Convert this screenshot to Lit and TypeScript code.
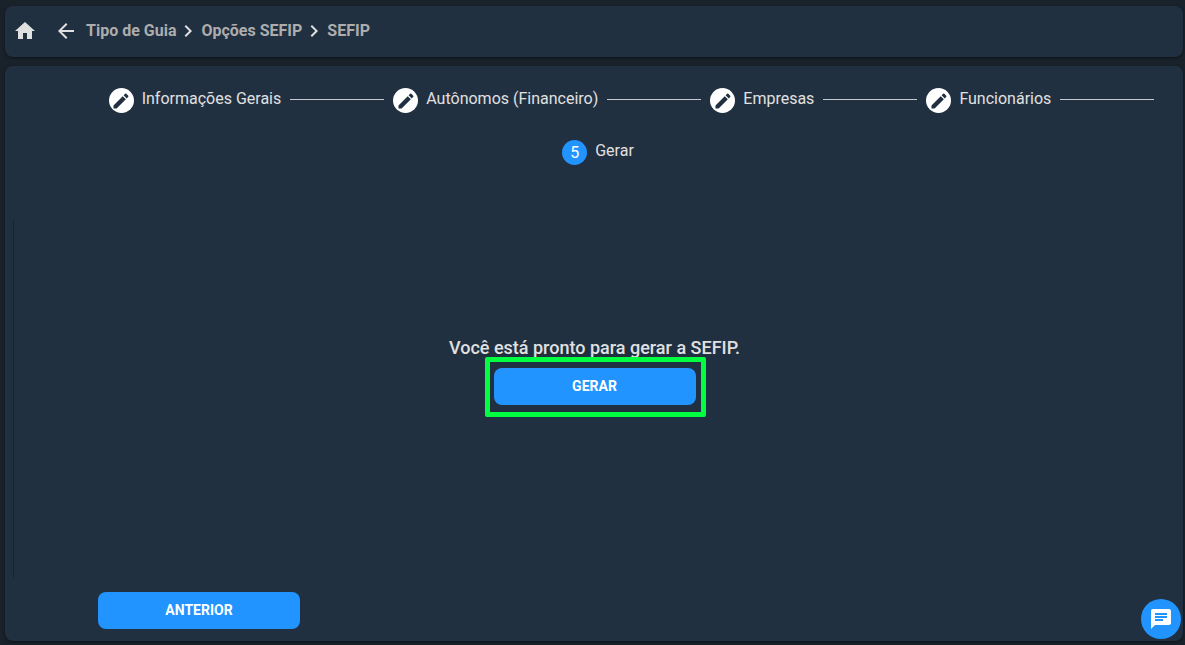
import { LitElement, html, css, svg } from "lit";
import { customElement, property, state } from "lit/decorators.js";

const icon = (path: string, size: number) => html`
  <svg width=${size} height=${size} viewBox="0 0 24 24" fill="currentColor" aria-hidden="true">
    ${svg`<path d=${path}></path>`}
  </svg>
`;

const HOME = "M10 20v-6h4v6h5v-8h3L12 3 2 12h3v8z";
const BACK = "M20 11H7.83l5.59-5.59L12 4l-8 8 8 8 1.41-1.41L7.83 13H20v-2z";
const CHEVRON = "M10 6L8.59 7.41 13.17 12l-4.58 4.59L10 18l6-6z";
const PENCIL =
  "M3 17.25V21h3.75L17.81 9.94l-3.75-3.75L3 17.25zM20.71 7.04c.39-.39.39-1.02 0-1.41l-2.34-2.34c-.39-.39-1.02-.39-1.41 0l-1.83 1.83 3.75 3.75 1.83-1.83z";
const CHAT =
  "M20 2H4c-1.1 0-1.99.9-1.99 2L2 22l4-4h14c1.1 0 2-.9 2-2V4c0-1.1-.9-2-2-2zM6 9h12v2H6V9zm8 5H6v-2h8v2zm4-6H6V6h12v2z";

@customElement("sefip-breadcrumb")
class SefipBreadcrumb extends LitElement {
  @property({ attribute: false }) items: string[] = [];

  static styles = css`
    :host {
      display: block;
    }
    .bar {
      display: flex;
      align-items: center;
      min-height: 51px;
      padding: 0 8px 2px;
      box-sizing: border-box;
      border-radius: 8px;
      background: #213040;
      box-shadow: 0 1px 3px rgba(0, 0, 0, 0.5);
    }
    svg {
      display: block;
    }
    .home,
    .back {
      color: #e0e0e0;
      background: none;
      border: 0;
      padding: 0;
      cursor: pointer;
    }
    .back {
      margin-left: 17px;
    }
    .trail {
      display: flex;
      align-items: center;
      flex-wrap: wrap;
      list-style: none;
      margin: 0 0 0 8px;
      padding: 0;
      color: #e0e0e0;
    }
    .crumb {
      display: flex;
      align-items: center;
      gap: 1px;
    }
    .link {
      color: #adadad;
      font-weight: 700;
      font-size: 16px;
      line-height: 24px;
      text-decoration: none;
    }
  `;

  render() {
    return html`
      <nav class="bar" aria-label="Navegação">
        <a class="home" href="#" aria-label="Início">${icon(HOME, 24)}</a>
        <button class="back" type="button" aria-label="Voltar">${icon(BACK, 24)}</button>
        <ol class="trail">
          ${this.items.map(
            (item, i) => html`<li class="crumb">
              ${i > 0 ? icon(CHEVRON, 24) : ""}<a class="link" href="#">${item}</a>
            </li>`
          )}
        </ol>
      </nav>
    `;
  }
}

@customElement("sefip-steps")
class SefipSteps extends LitElement {
  @property({ attribute: false }) steps: string[] = [];
  @property({ type: Number }) current = 0;

  static styles = css`
    :host {
      display: block;
    }
    .steps {
      display: flex;
      flex-wrap: wrap;
      justify-content: center;
      gap: 27px 9px;
      list-style: none;
      margin: 0;
      padding: 0 0 0 8px;
    }
    .step {
      display: flex;
      align-items: center;
      gap: 8px;
      color: #e0e0e0;
    }
    .step:first-child {
      margin-left: 67px;
    }
    .step.current {
      flex-basis: 100%;
      justify-content: center;
    }
    .mark {
      display: flex;
      align-items: center;
      justify-content: center;
      width: 25px;
      height: 25px;
      border-radius: 50%;
      background: #fff;
      color: #213040;
      font-size: 16px;
      line-height: 24px;
    }
    .current .mark {
      background: #2194ff;
      color: #fff;
    }
    .label {
      font-size: 16px;
      line-height: 22px;
      padding-bottom: 3px;
    }
    .line {
      width: 94px;
      height: 1px;
      margin: 0 0 2px 1px;
      background: #c6cacf;
    }
  `;

  render() {
    return html`
      <ol class="steps">
        ${this.steps.map((label, i) => {
          const current = i === this.current;
          return html`<li class="step ${current ? "current" : ""}">
            <span class="mark">${current ? i + 1 : icon(PENCIL, 20)}</span>
            <span class="label">${label}</span>
            ${current ? "" : html`<span class="line"></span>`}
          </li>`;
        })}
      </ol>
    `;
  }
}

@customElement("app-root")
class AppRoot extends LitElement {
  @state() private step = 4;

  private crumbs = ["Tipo de Guia", "Opções SEFIP", "SEFIP"];
  private steps = [
    "Informações Gerais",
    "Autônomos (Financeiro)",
    "Empresas",
    "Funcionários",
    "Gerar",
  ];

  static styles = css`
    :host {
      display: flex;
      flex-direction: column;
      gap: 9px;
      box-sizing: border-box;
      min-height: 100vh;
      padding: 6px 2px 4px 5px;
      background: #19222b;
      color: #e0e0e0;
      font-family: Roboto, "Liberation Sans", sans-serif;
    }
    .panel {
      flex: 1;
      display: flex;
      flex-direction: column;
      box-sizing: border-box;
      padding: 22px 0 12px;
      border-radius: 8px;
      background: #213040;
      box-shadow: 0 1px 3px rgba(0, 0, 0, 0.5);
    }
    .content {
      flex: 1;
      display: flex;
      flex-direction: column;
      align-items: center;
      justify-content: center;
      margin: 55px 8px 14px;
      padding-bottom: 57px;
      border-left: 1px solid #17232f;
    }
    .title {
      margin: 0 0 8px;
      font-size: 18px;
      line-height: 24px;
      font-weight: 500;
    }
    .button {
      width: 202px;
      height: 37px;
      padding: 0 16px 2px;
      border: 0;
      border-radius: 8px;
      background: #2194ff;
      color: #fff;
      font-family: inherit;
      font-size: 14px;
      line-height: 20px;
      font-weight: 700;
      text-transform: uppercase;
      cursor: pointer;
    }
    .target {
      position: relative;
      display: flex;
    }
    .highlight {
      position: absolute;
      inset: -11px -10px -12px -9px;
      border: 5px solid #00ff40;
      border-radius: 2px;
      pointer-events: none;
    }
    .footer {
      display: flex;
      padding: 0 93px;
    }
    .chat {
      position: fixed;
      right: 4px;
      bottom: 6px;
      display: flex;
      align-items: center;
      justify-content: center;
      width: 40px;
      height: 40px;
      padding: 0;
      border: 0;
      border-radius: 50%;
      background: #2194ff;
      color: #fff;
      cursor: pointer;
    }
  `;

  render() {
    return html`
      <sefip-breadcrumb .items=${this.crumbs}></sefip-breadcrumb>
      <main class="panel">
        <sefip-steps .steps=${this.steps} .current=${this.step}></sefip-steps>
        <section class="content">
          <h1 class="title">Você está pronto para gerar a SEFIP.</h1>
          <div class="target">
            <button class="button" type="button">Gerar</button>
            <span class="highlight"></span>
          </div>
        </section>
        <div class="footer">
          <button class="button" type="button">Anterior</button>
        </div>
      </main>
      <button class="chat" type="button" aria-label="Abrir chat">${icon(CHAT, 24)}</button>
    `;
  }
}
